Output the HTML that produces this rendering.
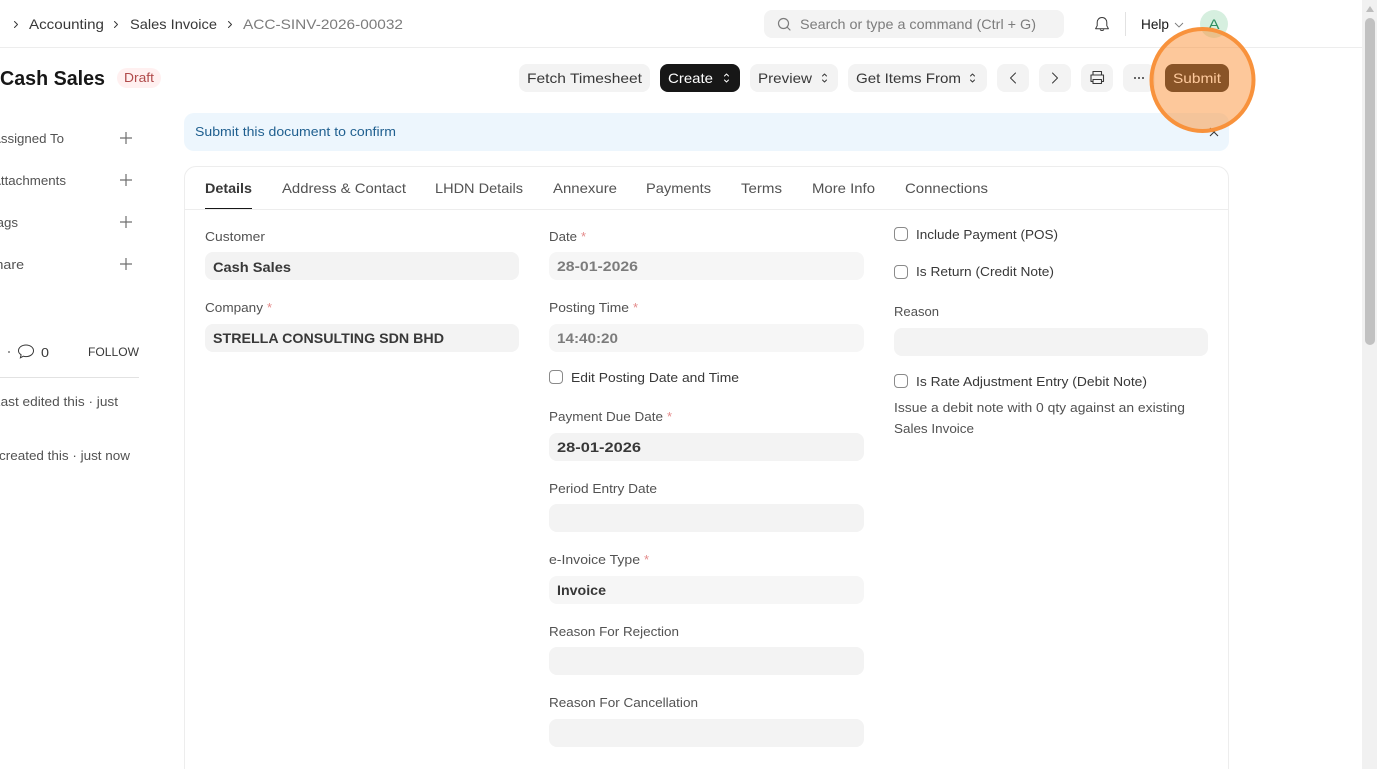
<!DOCTYPE html>
<html lang="en"><head><meta charset="utf-8"><title>Cash Sales</title>
<style>
html,body{margin:0;padding:0;width:1377px;height:769px;overflow:hidden;background:#fff}
#p{position:relative;width:1377px;height:769px;overflow:hidden}
.b{position:absolute;box-sizing:border-box}
.f{background:#f3f3f3;border-radius:8px;height:28px}
.btn{background:#f3f3f3;border-radius:8px;height:28px;top:64px}
.cb{width:14px;height:14px;border:1px solid #8a8a8a;border-radius:4px;background:#fff}
svg{position:absolute;left:0;top:0}
text{font-family:"Liberation Sans",sans-serif;font-size:13px;fill:#525252}
.n{font-size:14px;fill:#383838}
.l{font-size:13px;fill:#525252}
.v{font-size:14px;font-weight:bold;fill:#383838}
.s{fill:#e48a8a;font-size:13px}
.tab{font-size:14px;fill:#525252}
.c{font-size:13px;fill:#383838}
</style></head><body><div id="p">
<div class="b" style="left:0;top:47px;width:1362px;height:1px;background:#ededed"></div>
<div class="b" style="left:764px;top:10px;width:300px;height:28px;background:#f3f3f3;border-radius:8px"></div>
<div class="b" style="left:1125px;top:12px;width:1px;height:24px;background:#e2e2e2"></div>
<div class="b" style="left:1200px;top:10px;width:28px;height:28px;border-radius:50%;background:#d6efdf"></div>
<div class="b" style="left:117px;top:68px;width:44px;height:20px;border-radius:10px;background:#fff0f0"></div>
<div class="b btn" style="left:519px;width:131px"></div>
<div class="b btn" style="left:660px;width:80px;background:#171717"></div>
<div class="b btn" style="left:750px;width:88px"></div>
<div class="b btn" style="left:848px;width:139px"></div>
<div class="b btn" style="left:997px;width:32px"></div>
<div class="b btn" style="left:1039px;width:32px"></div>
<div class="b btn" style="left:1081px;width:32px"></div>
<div class="b btn" style="left:1123px;width:32px"></div>
<div class="b btn" style="left:1165px;width:64px;background:#171717"></div>
<div class="b" style="left:184px;top:113px;width:1045px;height:38px;background:#edf6fd;border-radius:10px"></div>
<div class="b" style="left:184px;top:166px;width:1045px;height:640px;border:1px solid #ededed;border-radius:12px;background:#fff"></div>
<div class="b" style="left:185px;top:209px;width:1043px;height:1px;background:#ededed"></div>
<div class="b" style="left:205px;top:208px;width:47px;height:1px;background:#171717"></div>
<div class="b" style="left:0;top:377px;width:139px;height:1px;background:#e2e2e2"></div>
<div class="b f" style="left:205px;top:252px;width:314px"></div>
<div class="b f" style="left:205px;top:324px;width:314px"></div>
<div class="b f" style="left:549px;top:252px;width:315px;background:#f6f6f6"></div>
<div class="b f" style="left:549px;top:324px;width:315px;background:#f6f6f6"></div>
<div class="b f" style="left:549px;top:433px;width:315px"></div>
<div class="b f" style="left:549px;top:504px;width:315px"></div>
<div class="b f" style="left:549px;top:576px;width:315px;background:#f6f6f6"></div>
<div class="b f" style="left:549px;top:647px;width:315px"></div>
<div class="b f" style="left:549px;top:719px;width:315px"></div>
<div class="b f" style="left:894px;top:328px;width:314px"></div>
<div class="b cb" style="left:549px;top:370px"></div>
<div class="b cb" style="left:894px;top:227px"></div>
<div class="b cb" style="left:894px;top:265px"></div>
<div class="b cb" style="left:894px;top:374px"></div>
<div class="b" style="left:1362px;top:0;width:15px;height:769px;background:#f1f1f1"></div>
<div class="b" style="left:1365px;top:18px;width:10px;height:327px;background:#c1c1c1;border-radius:5px"></div>
<svg width="1377" height="769" viewBox="0 0 1377 769" fill="none">
<path d="M1366 12 L1370 6 L1374 12 Z" fill="#bdbdbd"/>
<g stroke="#383838" stroke-width="1" stroke-linecap="round" stroke-linejoin="round">
<path d="M14.500 21.500 L17.500 24.500 L14.500 27.500"/><path d="M114.500 21.500 L117.500 24.500 L114.500 27.500"/><path d="M228.500 21.500 L231.500 24.500 L228.500 27.500"/>
</g>
<text x="29" y="29" class="n" textLength="75" lengthAdjust="spacingAndGlyphs">Accounting</text>
<text x="130" y="29" class="n" textLength="87" lengthAdjust="spacingAndGlyphs">Sales Invoice</text>
<text x="243" y="29" class="n" style="fill:#7c7c7c" textLength="160" lengthAdjust="spacingAndGlyphs">ACC-SINV-2026-00032</text>
<circle cx="783.500" cy="23.500" r="5" stroke="#7c7c7c" stroke-width="1.200"/><path d="M787 27 L790 30" stroke="#7c7c7c" stroke-width="1.200" stroke-linecap="round"/>
<text x="800" y="29" class="n" style="fill:#7c7c7c" textLength="236" lengthAdjust="spacingAndGlyphs">Search or type a command (Ctrl + G)</text>
<path d="M1102 17.500c-3 0-4.800 2.300-4.800 5v3.200l-1.600 3h12.800l-1.600-3v-3.200c0-2.700-1.800-5-4.800-5zM1100.200 29.500c.4 1.300 3.200 1.300 3.600 0" stroke="#383838" stroke-width="1" stroke-linejoin="round"/>
<text x="1141" y="29" class="n" style="fill:#171717;font-size:13.500px" textLength="28" lengthAdjust="spacingAndGlyphs">Help</text>
<path d="M1175 23 L1179 27 L1183 23" stroke="#7c7c7c" stroke-width=".9"/>
<text x="1208.500" y="29" style="font-size:14px;fill:#2f8f5f" textLength="11" lengthAdjust="spacingAndGlyphs">A</text>
<text x="0" y="85" style="font-size:20px;font-weight:bold;fill:#171717" textLength="105" lengthAdjust="spacingAndGlyphs">Cash Sales</text>
<text x="124" y="82" style="font-size:13px;fill:#b04a4a" textLength="30" lengthAdjust="spacingAndGlyphs">Draft</text>
<text x="527" y="83" class="n" style="fill:#383838" textLength="115" lengthAdjust="spacingAndGlyphs">Fetch Timesheet</text>
<text x="668" y="83" class="n" style="fill:#fff" textLength="45" lengthAdjust="spacingAndGlyphs">Create</text>
<text x="758" y="83" class="n" textLength="54" lengthAdjust="spacingAndGlyphs">Preview</text>
<text x="856" y="83" class="n" textLength="105" lengthAdjust="spacingAndGlyphs">Get Items From</text>
<g stroke-width="1" stroke-linecap="round" stroke-linejoin="round">
<path d="M724.500 76 L726.500 74 L728.500 76 M724.500 80 L726.500 82 L728.500 80" stroke="#fff"/>
<path d="M822.500 76 L824.500 74 L826.500 76 M822.500 80 L824.500 82 L826.500 80" stroke="#383838"/>
<path d="M970.500 76 L972.500 74 L974.500 76 M970.500 80 L972.500 82 L974.500 80" stroke="#383838"/>
</g>
<path d="M1015.500 73 L1010.500 78 L1015.500 83" stroke="#383838" stroke-width="1" stroke-linecap="round" stroke-linejoin="round"/>
<path d="M1052.500 73 L1057.500 78 L1052.500 83" stroke="#383838" stroke-width="1" stroke-linecap="round" stroke-linejoin="round"/>
<path d="M1093 75v-3.500h8.500v3.500M1093 81.500h-2v-6.500h12.500v6.500h-2M1093 79.500h8.500v4h-8.500z" stroke="#383838" stroke-width="1.100" stroke-linejoin="round"/>
<g fill="#383838"><circle cx="1135" cy="78" r="1"/><circle cx="1139" cy="78" r="1"/><circle cx="1143" cy="78" r="1"/></g>
<text x="195" y="136" style="font-size:13px;fill:#1f5f8f" textLength="201" lengthAdjust="spacingAndGlyphs">Submit this document to confirm</text>
<path d="M1210 128 L1218 136 M1218 128 L1210 136" stroke="#383838" stroke-width="1.100"/>
<g class="side">
<text x="-8" y="143" class="l" textLength="72" lengthAdjust="spacingAndGlyphs">Assigned To</text>
<text x="-8" y="185" class="l" textLength="74" lengthAdjust="spacingAndGlyphs">Attachments</text>
<text x="-10" y="227" class="l" textLength="28" lengthAdjust="spacingAndGlyphs">Tags</text>
<text x="-14" y="269" class="l" textLength="38" lengthAdjust="spacingAndGlyphs">Share</text>
</g>
<path d="M126 132v12M120 138h12M126 174v12M120 180h12M126 216v12M120 222h12M126 258v12M120 264h12" stroke="#6f6f6f" stroke-width="1.200"/>
<circle cx="9" cy="352" r="1" fill="#7c7c7c"/>
<path d="M26 345c4.200 0 7.500 2.500 7.500 5.800s-3.300 5.800-7.500 5.800c-.9 0-1.800-.1-2.600-.4l-3 1.600.7-3c-1.600-1-2.600-2.400-2.600-4 0-3.300 3.300-5.800 7.500-5.800z" stroke="#383838" stroke-width="1"/>
<text x="41" y="357" class="c" textLength="8" lengthAdjust="spacingAndGlyphs">0</text>
<text x="88" y="356" style="font-size:12px;fill:#383838" textLength="51" lengthAdjust="spacingAndGlyphs">FOLLOW</text>
<text x="-7" y="406" class="l" textLength="125" lengthAdjust="spacingAndGlyphs">Last edited this · just</text>
<text x="-1" y="460" class="l" textLength="131" lengthAdjust="spacingAndGlyphs">created this · just now</text>
<text x="205" y="193" class="tab" style="font-weight:bold;fill:#383838" textLength="47" lengthAdjust="spacingAndGlyphs">Details</text>
<text x="282" y="193" class="tab" textLength="124" lengthAdjust="spacingAndGlyphs">Address &amp; Contact</text>
<text x="435" y="193" class="tab" textLength="88" lengthAdjust="spacingAndGlyphs">LHDN Details</text>
<text x="553" y="193" class="tab" textLength="64" lengthAdjust="spacingAndGlyphs">Annexure</text>
<text x="646" y="193" class="tab" textLength="65" lengthAdjust="spacingAndGlyphs">Payments</text>
<text x="741" y="193" class="tab" textLength="41" lengthAdjust="spacingAndGlyphs">Terms</text>
<text x="812" y="193" class="tab" textLength="63" lengthAdjust="spacingAndGlyphs">More Info</text>
<text x="905" y="193" class="tab" textLength="83" lengthAdjust="spacingAndGlyphs">Connections</text>
<text x="205" y="241" class="l" textLength="60" lengthAdjust="spacingAndGlyphs">Customer</text>
<text x="213" y="272" class="v" textLength="78" lengthAdjust="spacingAndGlyphs">Cash Sales</text>
<text x="205" y="312" class="l" textLength="58" lengthAdjust="spacingAndGlyphs">Company</text><text x="267" y="312" class="s">*</text>
<text x="213" y="343" class="v" textLength="231" lengthAdjust="spacingAndGlyphs">STRELLA CONSULTING SDN BHD</text>
<text x="549" y="241" class="l" textLength="28" lengthAdjust="spacingAndGlyphs">Date</text><text x="581" y="241" class="s">*</text>
<text x="557" y="271" class="v" style="fill:#7c7c7c" textLength="81" lengthAdjust="spacingAndGlyphs">28-01-2026</text>
<text x="549" y="312" class="l" textLength="80" lengthAdjust="spacingAndGlyphs">Posting Time</text><text x="633" y="312" class="s">*</text>
<text x="557" y="343" class="v" style="fill:#7c7c7c" textLength="61" lengthAdjust="spacingAndGlyphs">14:40:20</text>
<text x="571" y="382" class="c" textLength="168" lengthAdjust="spacingAndGlyphs">Edit Posting Date and Time</text>
<text x="549" y="421" class="l" textLength="114" lengthAdjust="spacingAndGlyphs">Payment Due Date</text><text x="667" y="421" class="s">*</text>
<text x="557" y="452" class="v" textLength="84" lengthAdjust="spacingAndGlyphs">28-01-2026</text>
<text x="549" y="493" class="l" textLength="108" lengthAdjust="spacingAndGlyphs">Period Entry Date</text>
<text x="549" y="564" class="l" textLength="91" lengthAdjust="spacingAndGlyphs">e-Invoice Type</text><text x="644" y="564" class="s">*</text>
<text x="557" y="595" class="v" textLength="49" lengthAdjust="spacingAndGlyphs">Invoice</text>
<text x="549" y="636" class="l" textLength="130" lengthAdjust="spacingAndGlyphs">Reason For Rejection</text>
<text x="549" y="707" class="l" textLength="149" lengthAdjust="spacingAndGlyphs">Reason For Cancellation</text>
<text x="916" y="239" class="c" textLength="142" lengthAdjust="spacingAndGlyphs">Include Payment (POS)</text>
<text x="916" y="276" class="c" textLength="138" lengthAdjust="spacingAndGlyphs">Is Return (Credit Note)</text>
<text x="894" y="316" class="l" textLength="45" lengthAdjust="spacingAndGlyphs">Reason</text>
<text x="916" y="386" class="c" textLength="231" lengthAdjust="spacingAndGlyphs">Is Rate Adjustment Entry (Debit Note)</text>
<text x="894" y="412" class="l" textLength="291" lengthAdjust="spacingAndGlyphs">Issue a debit note with 0 qty against an existing</text>
<text x="894" y="433" class="l" textLength="80" lengthAdjust="spacingAndGlyphs">Sales Invoice</text>
<text x="1173" y="83" style="font-size:14px;fill:#fff" textLength="48" lengthAdjust="spacingAndGlyphs">Submit</text>
<circle cx="1202.500" cy="80" r="51" fill="#fc9137" fill-opacity=".5" stroke="#f8923c" stroke-width="4"/>
</svg>
</div></body></html>
